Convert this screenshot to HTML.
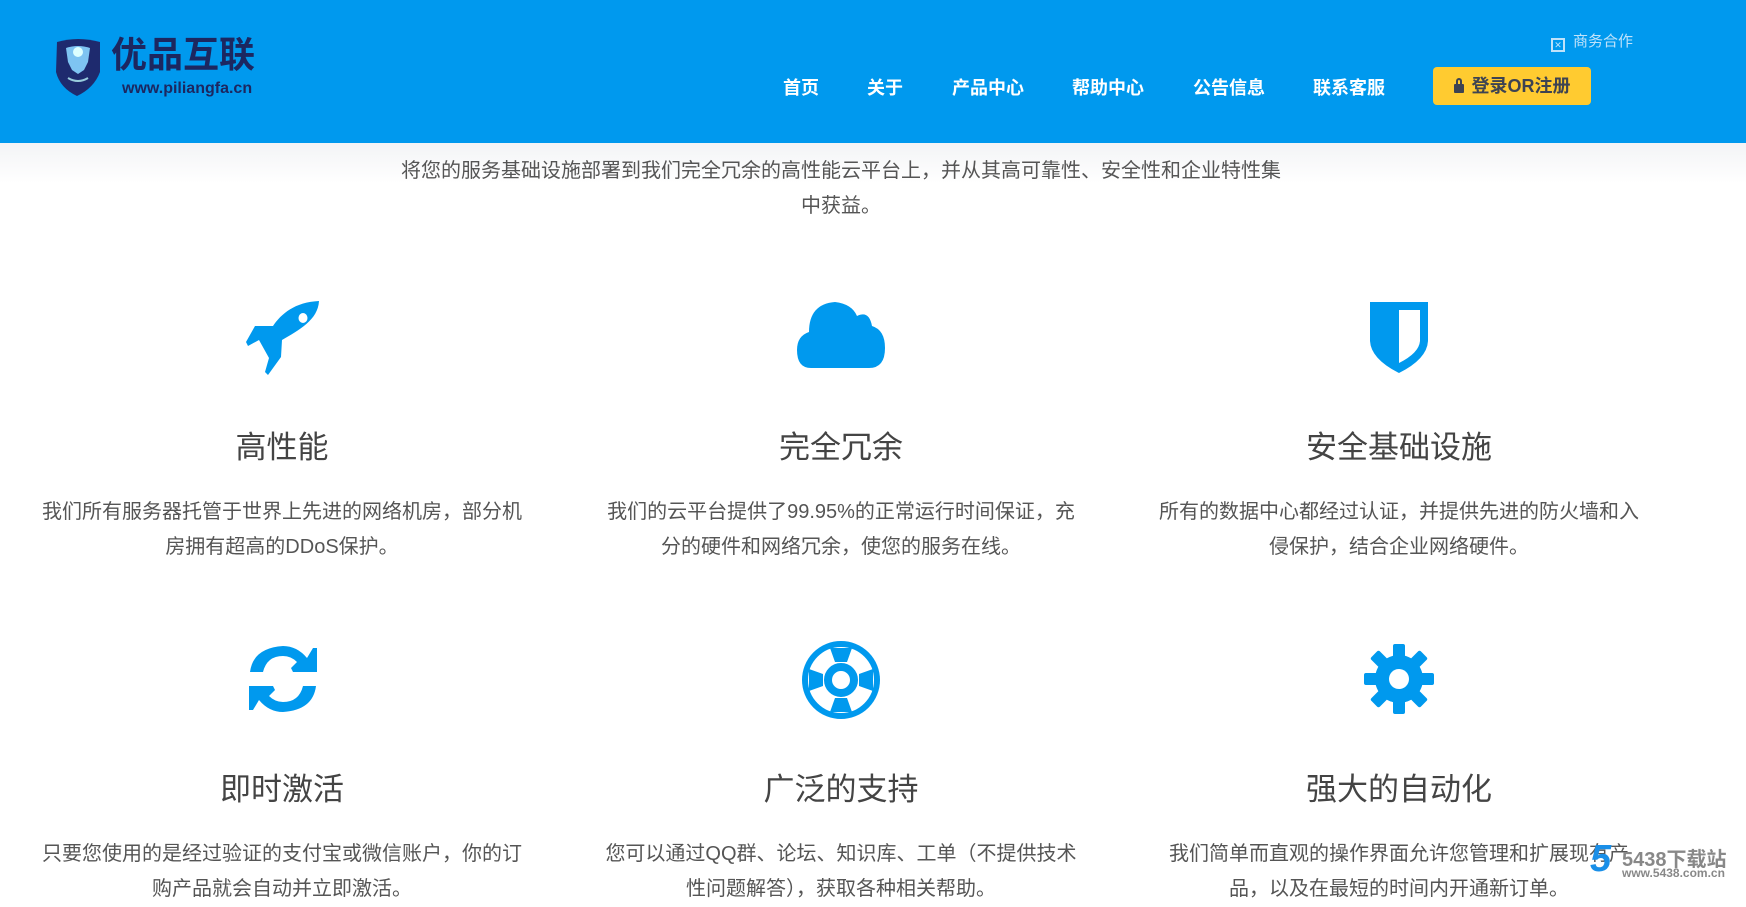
<!DOCTYPE html>
<html><head><meta charset="utf-8"><style>
*{margin:0;padding:0;box-sizing:border-box}
body{width:1746px;height:886px;overflow:hidden;background:#fff;font-family:"Liberation Sans","Noto Sans CJK SC",sans-serif;position:relative}
.hdr{position:absolute;left:0;top:0;width:1746px;height:143px;background:#0099ee}
.shade{position:absolute;left:0;top:143px;width:1746px;height:40px;background:linear-gradient(#f3f4f6,#fff)}
.a{position:absolute;white-space:nowrap}
.nav{top:74px;font-size:18px;font-weight:bold;color:#fff}
.btn{left:1433px;top:67px;width:158px;height:38px;background:#ffcb30;border-radius:4px;color:#3d4352;font-weight:bold;font-size:18px;line-height:38px;text-align:center}
.col{position:absolute;width:520px;text-align:center}
.t{font-size:31px;color:#444;}
.d{font-size:20px;color:#555;line-height:35px;margin-top:28px}
svg.i{position:absolute}
</style></head><body>
<div class="hdr"></div><div class="shade"></div>
<svg class="a" style="left:50px;top:38px" width="58" height="60" viewBox="0 0 50 60"><path d="M3 4 Q24 -2 46 4 L46 34 Q40 50 23 58 Q6 50 2 34Z" fill="#1e2a6e"/><path d="M12 10 Q24 6 36 10 L34 24 L30 32 L24 36 L18 32 L14 24Z" fill="#7ec4f2"/><circle cx="24" cy="14" r="5" fill="#dff"/><path d="M14 40 Q24 46 34 40" stroke="#9cd" stroke-width="2" fill="none"/></svg>
<div class="a" style="left:111px;top:33px;font-size:36px;line-height:44px;font-weight:bold;color:#1c2760">优品互联</div>
<div class="a" style="left:122px;top:80px;font-size:16px;line-height:18px;font-weight:bold;color:#1c2760">www.piliangfa.cn</div>
<div class="a" style="left:1551px;top:30px;font-size:15px;color:#bfe2fa"><span style="display:inline-block;width:14px;height:14px;border:2px solid #bfe2fa;vertical-align:-2px;margin-right:8px;font-size:9px;line-height:10px;text-align:center">✕</span>商务合作</div>
<div class="a nav" style="left:783px">首页</div>
<div class="a nav" style="left:867px">关于</div>
<div class="a nav" style="left:952px">产品中心</div>
<div class="a nav" style="left:1072px">帮助中心</div>
<div class="a nav" style="left:1193px">公告信息</div>
<div class="a nav" style="left:1313px">联系客服</div>
<div class="a btn"><span style="display:inline-block;width:10px;height:9px;background:#3d4352;border-radius:1px;position:relative;margin-right:8px;vertical-align:-1px"><span style="position:absolute;left:2px;top:-6px;width:6px;height:8px;border:2px solid #3d4352;border-bottom:none;border-radius:3px 3px 0 0"></span></span>登录OR注册</div>
<div class="a" style="left:341px;top:154px;width:1000px;text-align:center;font-size:20px;color:#555;line-height:35px;white-space:normal">将您的服务基础设施部署到我们完全冗余的高性能云平台上，并从其高可靠性、安全性和企业特性集<br>中获益。</div>

<svg class="i" style="left:245px;top:300px" width="76" height="76" viewBox="0 0 76 76"><path d="M74 1 C50 2 36 14 28 26 L10 26 L1 42 L3 46 L14 40 L24 58 L20 72 L23 75 L36 57 L37 40 C54 30 73 20 74 1Z" fill="#0099ee"/><ellipse cx="58" cy="18" rx="4.5" ry="5" fill="#fff"/></svg>
<svg class="i" style="left:797px;top:302px" width="88" height="66" viewBox="0 0 88 66"><path d="M14 66 Q0 66 0 48 Q0 34 12 30 Q12 2 38 0 Q55 2 60 14 Q72 8 75 24 Q88 28 88 46 Q88 66 72 66Z" fill="#0099ee"/></svg>
<svg class="i" style="left:1369px;top:301px" width="60" height="72" viewBox="0 0 60 72"><path d="M1 1 L59 1 L59 40 Q58 58 30 72 Q2 58 1 40Z" fill="#0099ee"/><path d="M30 9 L51 9 L51 40 Q50 52 30 62Z" fill="#fff"/></svg>
<svg class="i" style="left:247px;top:644px" width="72" height="70" viewBox="0 0 72 70"><path d="M3 28 Q6 4 36 2 Q50 2 60 14 L66 4 L70 4 L70 28 L46 28 L44 24 L50 18 Q44 12 36 12 Q20 12 16 28Z" fill="#0099ee"/><path d="M69 42 Q66 66 36 68 Q22 68 12 56 L6 66 L2 66 L2 42 L26 42 L28 46 L22 52 Q28 58 36 58 Q52 58 56 42Z" fill="#0099ee"/></svg>
<svg class="i" style="left:800px;top:640px" width="82" height="80" viewBox="0 0 82 80"><circle cx="41" cy="40" r="36" fill="none" stroke="#0099ee" stroke-width="6"/><circle cx="41" cy="40" r="13" fill="none" stroke="#0099ee" stroke-width="8"/><path d="M30 8 L52 8 L47 22 L35 22Z M30 72 L52 72 L47 58 L35 58Z M9 29 L9 51 L23 46 L23 34Z M73 29 L73 51 L59 46 L59 34Z" fill="#0099ee"/></svg>
<svg class="i" style="left:1364px;top:644px" width="70" height="70" viewBox="0 0 70 70"><g fill="#0099ee"><circle cx="35" cy="35" r="24"/><rect x="29" y="0" width="12" height="70" rx="2"/><rect x="29" y="0" width="12" height="70" rx="2" transform="rotate(45 35 35)"/><rect x="29" y="0" width="12" height="70" rx="2" transform="rotate(90 35 35)"/><rect x="29" y="0" width="12" height="70" rx="2" transform="rotate(135 35 35)"/></g><circle cx="35" cy="35" r="10" fill="#fff"/></svg>

<div class="col" style="left:22px;top:422px"><div class="t">高性能</div><div class="d">我们所有服务器托管于世界上先进的网络机房，部分机<br>房拥有超高的DDoS保护。</div></div>
<div class="col" style="left:581px;top:422px"><div class="t">完全冗余</div><div class="d">我们的云平台提供了99.95%的正常运行时间保证，充<br>分的硬件和网络冗余，使您的服务在线。</div></div>
<div class="col" style="left:1139px;top:422px"><div class="t">安全基础设施</div><div class="d">所有的数据中心都经过认证，并提供先进的防火墙和入<br>侵保护，结合企业网络硬件。</div></div>
<div class="col" style="left:22px;top:764px"><div class="t">即时激活</div><div class="d">只要您使用的是经过验证的支付宝或微信账户，你的订<br>购产品就会自动并立即激活。</div></div>
<div class="col" style="left:581px;top:764px"><div class="t">广泛的支持</div><div class="d">您可以通过QQ群、论坛、知识库、工单（不提供技术<br>性问题解答），获取各种相关帮助。</div></div>
<div class="col" style="left:1139px;top:764px"><div class="t">强大的自动化</div><div class="d">我们简单而直观的操作界面允许您管理和扩展现有产<br>品，以及在最短的时间内开通新订单。</div></div>

<div class="a" style="left:1590px;top:838px;font-size:38px;font-weight:bold;color:#1a8fe8;font-style:italic">5</div>
<div class="a" style="left:1622px;top:843px;font-size:20px;font-weight:bold;color:#888">5438下载站</div>
<div class="a" style="left:1622px;top:866px;font-size:12px;font-weight:bold;color:#888">www.5438.com.cn</div>
</body></html>
